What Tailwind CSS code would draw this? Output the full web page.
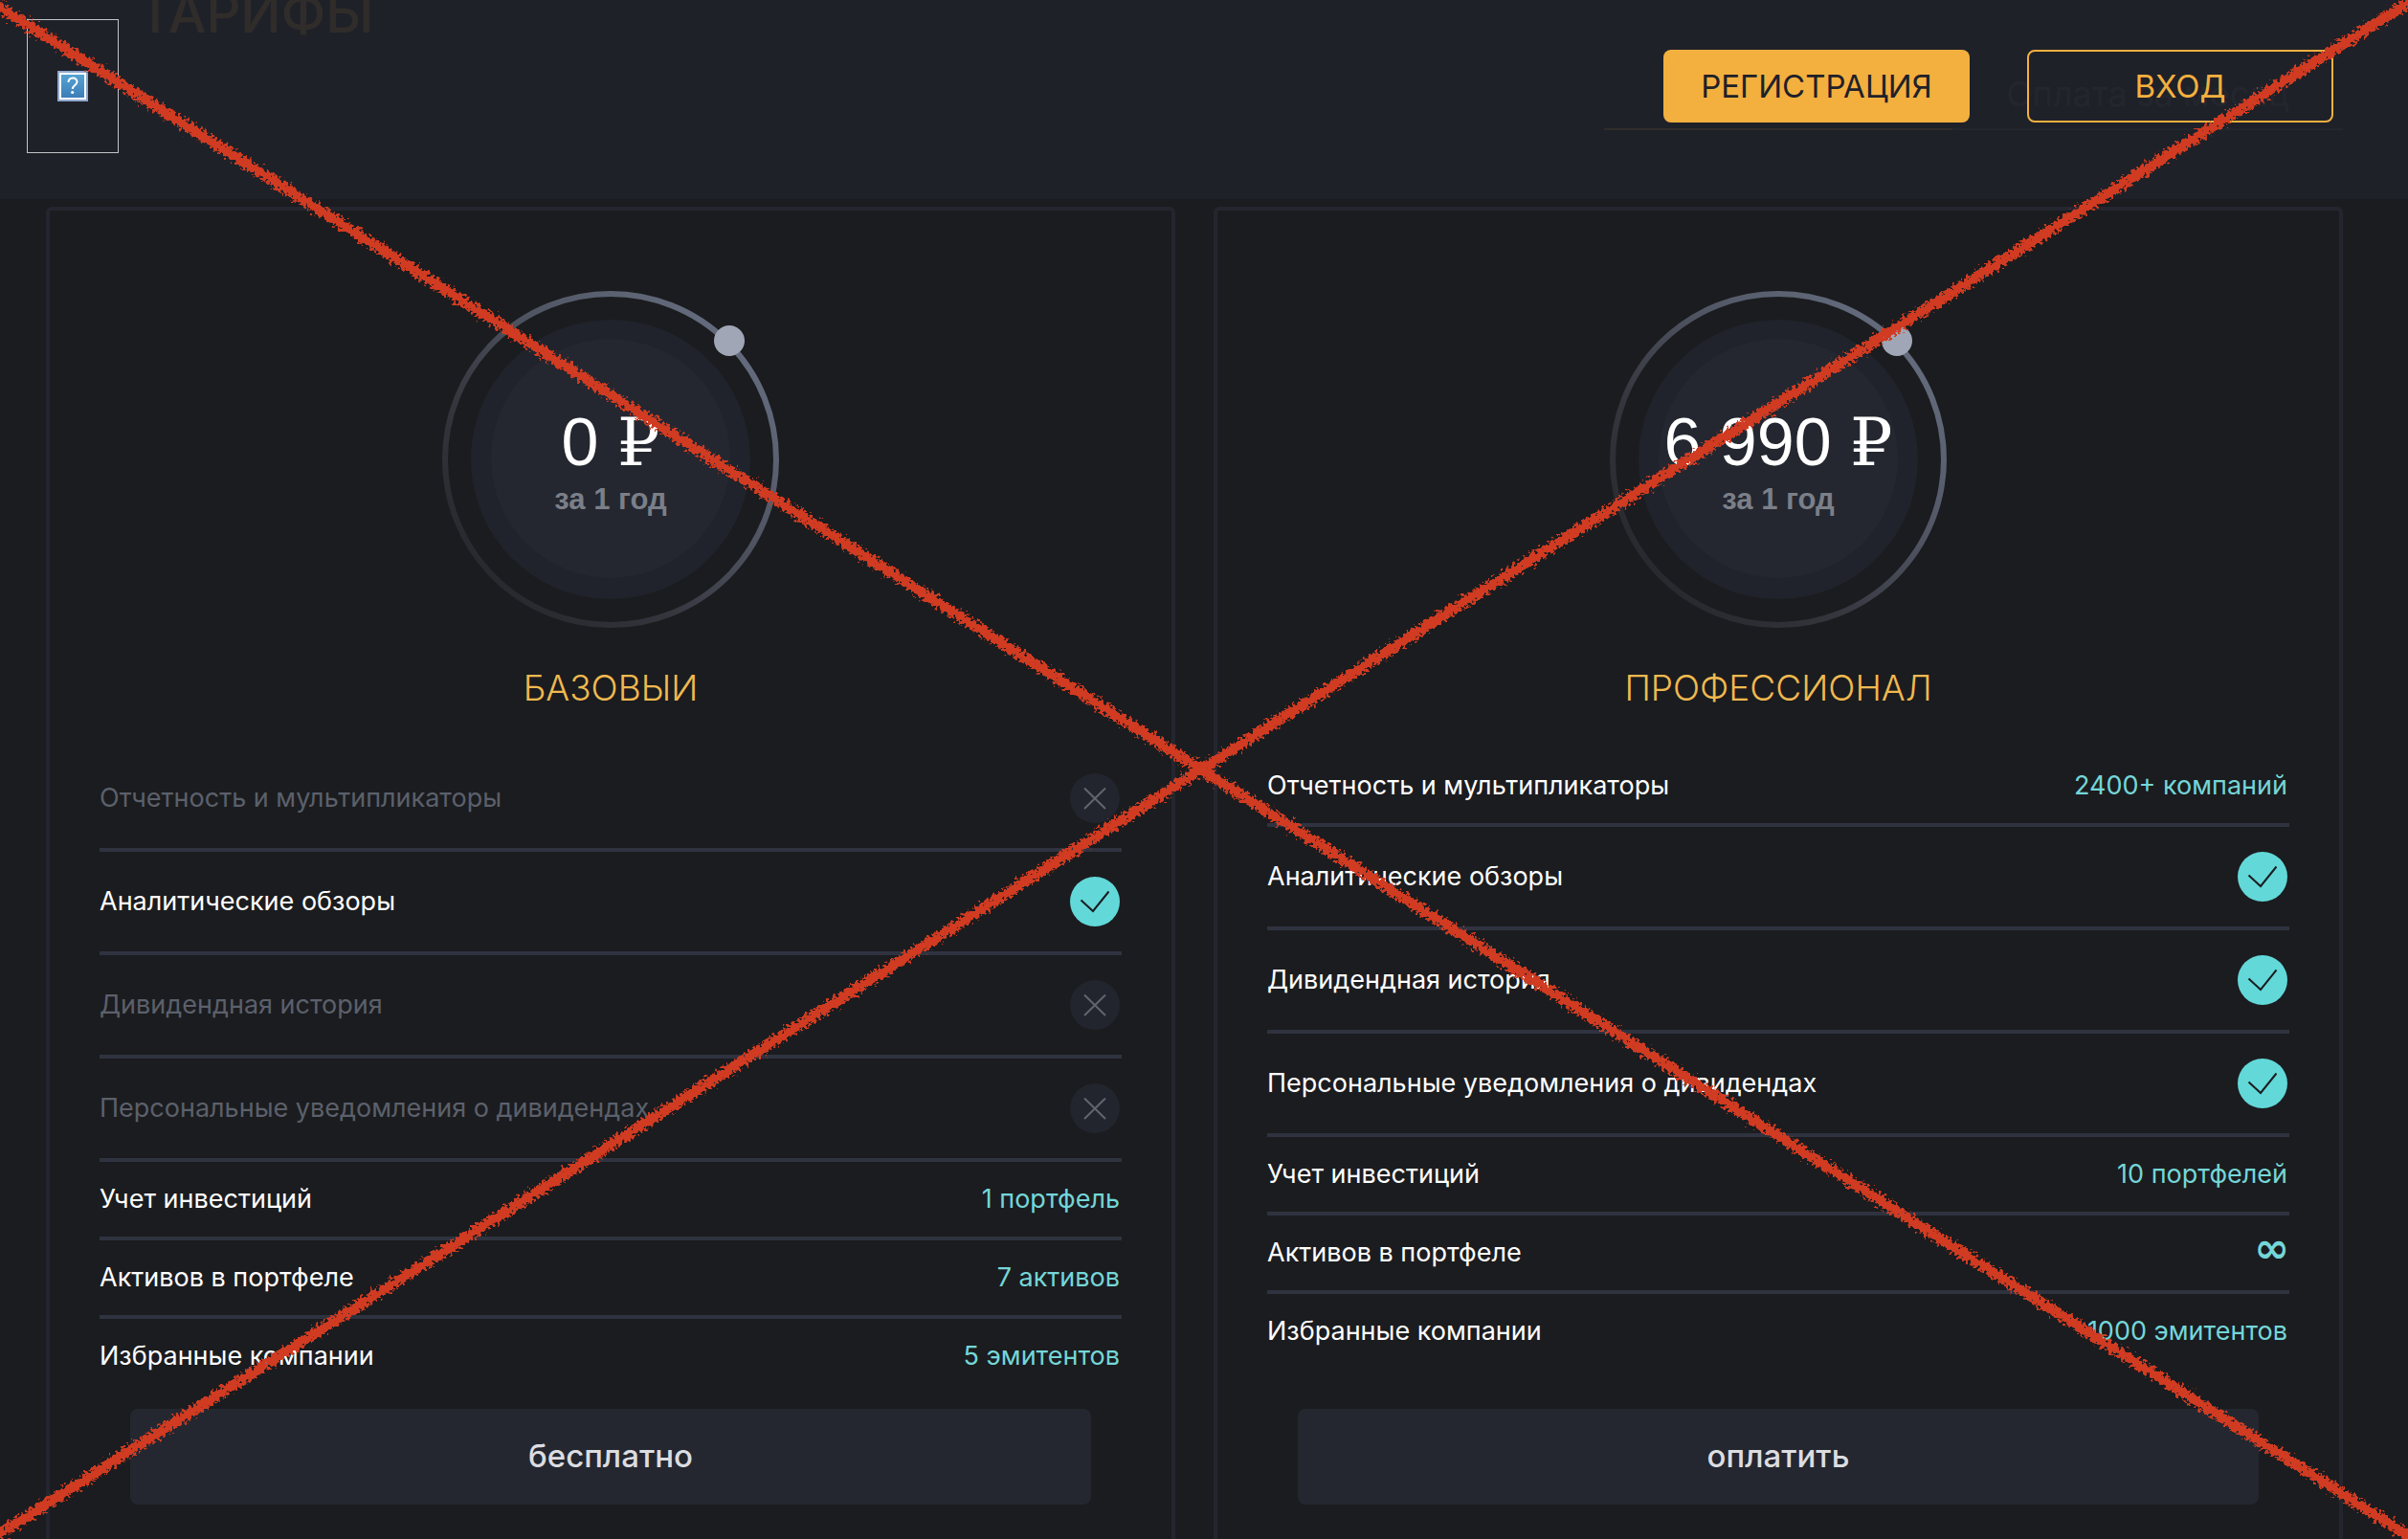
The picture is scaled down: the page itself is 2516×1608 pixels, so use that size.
<!DOCTYPE html>
<html lang="ru">
  <head>
    <meta charset="UTF-8">
    <meta name="viewport" content="width=device-width, initial-scale=1.0">
    <title>Тарифы</title>
    <script src="https://cdn.jsdelivr.net/npm/@tailwindcss/browser@4"></script>
  </head>
  <body class="bg-[#1b1c1f] text-white font-['Inter',sans-serif]">
    <svg class="absolute size-0" aria-hidden="true">
      <symbol id="yes" viewBox="0 0 52 52">
        <circle cx="26" cy="26" r="26" fill="#62d8d9"/>
        <path d="M11.5 24.5 24 36 40.5 15.5" fill="none" stroke="#1b1c1f" stroke-width="2"/>
      </symbol>
      <symbol id="no" viewBox="0 0 52 52">
        <circle cx="26" cy="26" r="26" fill="#22252d"/>
        <path d="M15 15.5 37 37M37 15.5 15 37" fill="none" stroke="#61656d" stroke-width="2"/>
      </symbol>
      <symbol id="dial" viewBox="0 0 352 352">
        <circle cx="176" cy="176" r="173" fill="none" stroke="url(#ring)" stroke-width="6"/>
        <circle cx="176" cy="176" r="146" fill="#20232b"/>
        <circle cx="176" cy="175" r="125" fill="#242730"/>
        <circle cx="300" cy="52" r="16" fill="#a0a6b5"/>
      </symbol>
      <linearGradient id="ring" x1="1" y1="0" x2="0" y2="1">
        <stop offset="0.15" stop-color="#626a7b"/>
        <stop offset="0.4" stop-color="#505563"/>
        <stop offset="0.65" stop-color="#34363d"/>
        <stop offset="0.9" stop-color="#25272c"/>
      </linearGradient>
    </svg>

    <div class="relative min-h-screen overflow-hidden">
      <header class="absolute inset-x-0 top-0 z-10 flex h-52 items-start justify-between bg-[#1f2129]/93 pl-7 pr-[78px]">
        <a href="#" aria-label="На главную" class="mt-5 flex h-35 w-24 items-center justify-center border border-[#c3c4c6]">
          <svg class="size-8" viewBox="0 0 32 32">
            <defs>
              <linearGradient id="q" x1="0" y1="0" x2="0" y2="1">
                <stop offset="0" stop-color="#55a3d2"/>
                <stop offset="1" stop-color="#3d7db8"/>
              </linearGradient>
            </defs>
            <rect width="32" height="32" fill="#8fa9cf"/>
            <rect x="2" y="2" width="28" height="28" fill="#fff"/>
            <rect x="4" y="4" width="24" height="24" fill="url(#q)"/>
            <path d="M11.5 12c0-6 9-6 9-.5 0 3.5-4.7 3.5-4.7 7.5" fill="none" stroke="#fff" stroke-width="2"/>
            <circle cx="15.7" cy="22.5" r="1.6" fill="#fff"/>
          </svg>
        </a>
        <div class="mt-13 flex gap-15">
          <button type="button" class="h-19 w-80 rounded-lg bg-[#f3b03f] pt-0.5 text-[33px] text-[#1f2129]">РЕГИСТРАЦИЯ</button>
          <button type="button" class="h-19 w-80 rounded-lg border-2 border-[#f3b03f] pt-0.5 text-[33px] text-[#f3b03f]">ВХОД</button>
        </div>
      </header>

      <main class="pl-12 pr-[68px]">
        <div class="flex h-54 items-start justify-between">
          <h1 class="-mt-4 pl-24 text-[56px] leading-[60px] font-medium text-[#f3b03f]">ТАРИФЫ</h1>
          <div class="flex text-[36px] leading-[36px] text-[#5a6474]">
            <div class="h-34 w-91 border-b-2 border-[#f3b03f]"></div>
            <div class="h-34 w-102 border-b-2 border-[#4a6e80] pt-20 text-center">Оплата за месяц</div>
          </div>
        </div>

        <div class="grid grid-cols-2 gap-10">
          <section class="flex h-[1440px] flex-col rounded-md border-4 border-[#24262f] px-13 pt-21">
            <div class="relative mx-auto size-88">
              <svg class="size-full"><use href="#dial"/></svg>
              <div class="absolute inset-0 flex flex-col items-center pt-30 text-center font-['Liberation_Sans',sans-serif]">
                <p class="text-[70px] leading-[76px]">0 <span class="font-['DejaVu_Serif',serif] leading-[76px]">₽</span></p>
                <p class="text-[31px] leading-[44px] font-bold text-[#7b7f88]">за 1 год</p>
              </div>
            </div>
            <h2 class="pt-10 text-center text-[37px] leading-[46px] font-light text-[#f0b950]">БАЗОВЫИ</h2>
            <ul class="mt-10 text-[27px] leading-[26px]">
              <li class="flex items-center justify-between border-b-4 border-[#2f3340] py-[26px] pr-0.5 text-[#5b606b]">Отчетность и мультипликаторы<svg class="size-13" role="img" aria-label="нет"><use href="#no"/></svg></li>
              <li class="flex items-center justify-between border-b-4 border-[#2f3340] py-[26px] pr-0.5">Аналитические обзоры<svg class="size-13" role="img" aria-label="да"><use href="#yes"/></svg></li>
              <li class="flex items-center justify-between border-b-4 border-[#2f3340] py-[26px] pr-0.5 text-[#5b606b]">Дивидендная история<svg class="size-13" role="img" aria-label="нет"><use href="#no"/></svg></li>
              <li class="flex items-center justify-between border-b-4 border-[#2f3340] py-[26px] pr-0.5 text-[#5b606b]">Персональные уведомления о дивидендах<svg class="size-13" role="img" aria-label="нет"><use href="#no"/></svg></li>
              <li class="flex justify-between border-b-4 border-[#2f3340] py-[26px] pr-0.5">Учет инвестиций<span class="text-[#74d6d8]">1 портфель</span></li>
              <li class="flex justify-between border-b-4 border-[#2f3340] py-[26px] pr-0.5">Активов в портфеле<span class="text-[#74d6d8]">7 активов</span></li>
              <li class="flex justify-between py-[26px] pr-0.5">Избранные компании<span class="text-[#74d6d8]">5 эмитентов</span></li>
            </ul>
            <button type="button" class="mx-8 mt-auto mb-20 h-25 shrink-0 rounded-lg bg-[#242730] text-[33px] font-medium text-[#dcdde0]">бесплатно</button>
          </section>

          <section class="flex h-[1440px] flex-col rounded-md border-4 border-[#24262f] px-13 pt-21">
            <div class="relative mx-auto size-88">
              <svg class="size-full"><use href="#dial"/></svg>
              <div class="absolute inset-0 flex flex-col items-center pt-30 text-center font-['Liberation_Sans',sans-serif]">
                <p class="text-[70px] leading-[76px]">6 990 <span class="font-['DejaVu_Serif',serif] leading-[76px]">₽</span></p>
                <p class="text-[31px] leading-[44px] font-bold text-[#7b7f88]">за 1 год</p>
              </div>
            </div>
            <h2 class="pt-10 text-center text-[37px] leading-[46px] font-light text-[#f0b950]">ПРОФЕССИОНАЛ</h2>
            <ul class="mt-10 text-[27px] leading-[26px]">
              <li class="flex justify-between border-b-4 border-[#2f3340] py-[26px] pr-0.5">Отчетность и мультипликаторы<span class="text-[#74d6d8]">2400+ компаний</span></li>
              <li class="flex items-center justify-between border-b-4 border-[#2f3340] py-[26px] pr-0.5">Аналитические обзоры<svg class="size-13" role="img" aria-label="да"><use href="#yes"/></svg></li>
              <li class="flex items-center justify-between border-b-4 border-[#2f3340] py-[26px] pr-0.5">Дивидендная история<svg class="size-13" role="img" aria-label="да"><use href="#yes"/></svg></li>
              <li class="flex items-center justify-between border-b-4 border-[#2f3340] py-[26px] pr-0.5">Персональные уведомления о дивидендах<svg class="size-13" role="img" aria-label="да"><use href="#yes"/></svg></li>
              <li class="flex justify-between border-b-4 border-[#2f3340] py-[26px] pr-0.5">Учет инвестиций<span class="text-[#74d6d8]">10 портфелей</span></li>
              <li class="flex justify-between border-b-4 border-[#2f3340] py-[26px]">Активов в портфеле<span class="font-['DejaVu_Sans',sans-serif] text-[44px] leading-[16px] font-bold text-[#74d6d8]">∞</span></li>
              <li class="flex justify-between py-[26px] pr-0.5">Избранные компании<span class="text-[#74d6d8]">1000 эмитентов</span></li>
            </ul>
            <button type="button" class="mx-8 mt-auto mb-20 h-25 shrink-0 rounded-lg bg-[#242730] text-[33px] font-medium text-[#dcdde0]">оплатить</button>
          </section>
        </div>
      </main>

      <!-- Chalk cross over the whole page -->
      <svg class="pointer-events-none absolute inset-0 z-20 h-screen w-full" viewBox="0 0 2516 1608" preserveAspectRatio="none" aria-hidden="true">
        <filter id="chalk" filterUnits="userSpaceOnUse" x="0" y="0" width="2516" height="1608">
          <feTurbulence type="fractalNoise" baseFrequency="0.3" numOctaves="2" seed="4" result="n"/>
          <feDisplacementMap in="SourceGraphic" in2="n" scale="14" xChannelSelector="R" yChannelSelector="G"/>
        </filter>
        <g filter="url(#chalk)" fill="none" stroke="#d03a20" stroke-width="11">
          <path d="M-20-5 1255 804 2536 1617"/>
          <path d="M-20 1615 1255 804 2536-10"/>
        </g>
      </svg>
    </div>
  </body>
</html>
